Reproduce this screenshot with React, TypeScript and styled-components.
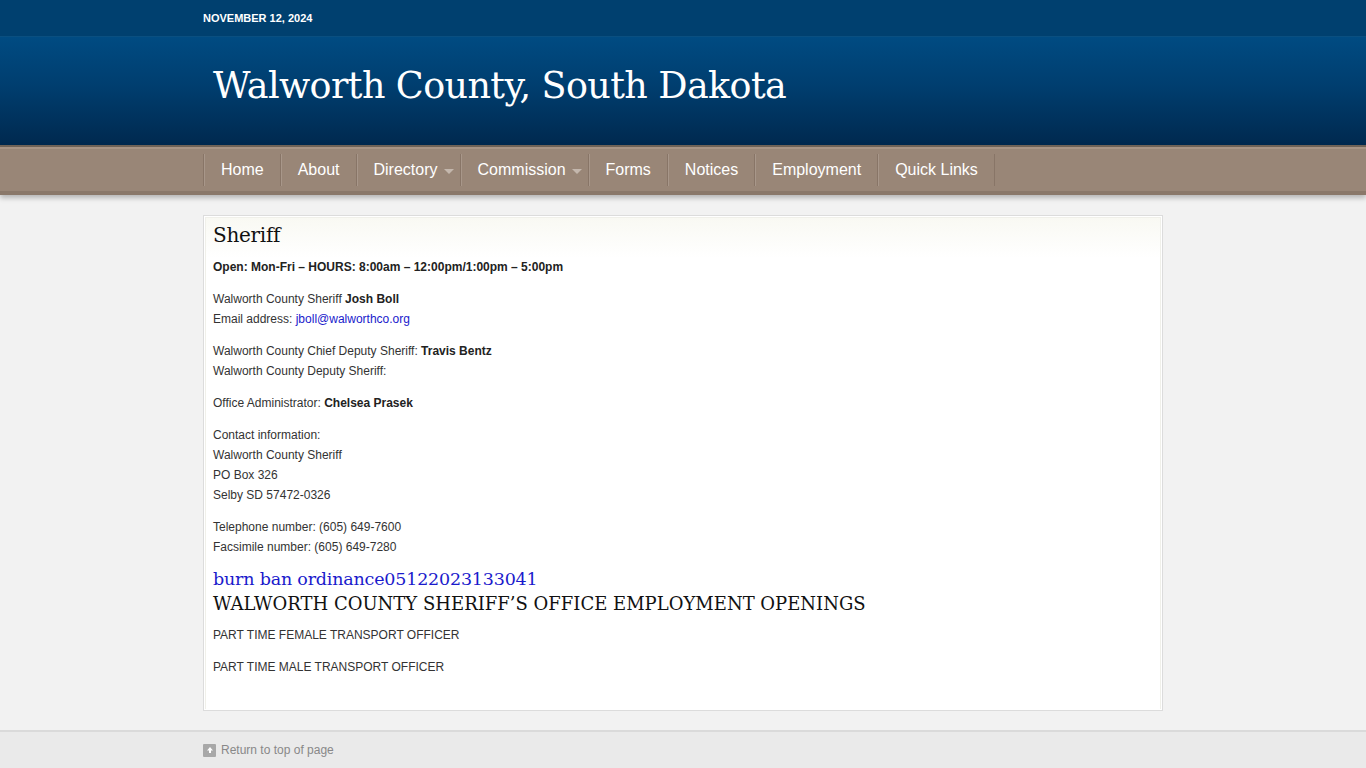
import React from "react";
import styled, { createGlobalStyle } from "styled-components";

const Global = createGlobalStyle`
  html, body { margin: 0; padding: 0; }
  body {
    background: #f2f2f2;
    font-family: "Liberation Sans", Arial, sans-serif;
    color: #333;
  }
`;

const Page = styled.div`
  min-height: 768px;
  display: flex;
  flex-direction: column;
`;

const Wrap = styled.div`
  width: 960px;
  margin: 0 auto;
`;

const TopBar = styled.div`
  background: #00406f;
  height: 36px;
  border-bottom: 1px solid #0a4f80;
`;

const DateText = styled.div`
  font-size: 11px;
  font-weight: bold;
  color: #fff;
  line-height: 36px;
`;

const Header = styled.header`
  height: 108px;
  background: linear-gradient(to bottom, #004b82 0%, #003e6f 45%, #00294f 100%);
`;

const SiteTitle = styled.h1`
  margin: 0;
  padding: 27px 0 0 10px;
  font-family: "DejaVu Serif", Georgia, serif;
  font-weight: normal;
  font-size: 36.5px;
  letter-spacing: -0.6px;
  color: #fff;
  line-height: 44px;
`;

const NavBar = styled.nav`
  background: #998677;
  border-top: 2px solid #6f6257;
  border-bottom: 4px solid #8a786a;
  box-shadow: inset 0 2px 0 #a89485, 0 3px 5px rgba(0, 0, 0, 0.25);
  height: 44px;
  position: relative;
  z-index: 1;
`;

const NavList = styled.ul`
  list-style: none;
  margin: 0 auto;
  padding: 0;
  width: 960px;
  display: flex;
  height: 44px;
`;

const NavItem = styled.li<{ $sub?: boolean }>`
  display: flex;
  align-items: center;
  gap: 4px;
  height: 32px;
  margin-top: 7px;
  padding: 0 ${(p) => (p.$sub ? "6px" : "16px")} 0 17px;
  border-left: 1px solid #887567;
  box-shadow: inset 1px 0 0 #a8978a;
  font-size: 16px;
  color: #fff;
  &:last-child {
    border-right: 1px solid #887567;
  }
`;

const Caret = styled.span`
  width: 0;
  height: 0;
  border-left: 5px solid transparent;
  border-right: 5px solid transparent;
  border-top: 5px solid #c4b7ad;
  margin: 2px 0 0 2px;
`;

const Main = styled.main`
  flex: 1;
  padding: 20px 0 18px;
`;

const Box = styled.article`
  width: 956px;
  margin: 0 auto;
  background: #fff;
  border: 1px solid #dcdcdc;
  padding: 1px;
  box-sizing: content-box;
`;

const Inner = styled.div`
  border: 1px solid #f0f0ea;
  border-bottom: none;
  background: linear-gradient(to bottom, #f9f9f3 0px, #ffffff 40px);
  padding: 3px 7px 20px;
`;

const PageTitle = styled.h2`
  margin: 0 0 8px;
  font-family: "DejaVu Serif", Georgia, serif;
  font-weight: normal;
  font-size: 20px;
  letter-spacing: -0.3px;
  color: #111;
  line-height: 28px;
`;

const P = styled.p`
  margin: 0 0 12px;
  font-size: 12px;
  line-height: 20px;
  color: #333;
  b, strong { color: #222; }
`;

const Mail = styled.a`
  color: #1a1acc;
  text-decoration: none;
`;

const DocLink = styled.a`
  display: block;
  font-family: "DejaVu Serif", Georgia, serif;
  font-size: 17.5px;
  letter-spacing: -0.2px;
  color: #1a1acc;
  text-decoration: none;
  line-height: 24px;
  margin: -2px 0 1px;
`;

const SubHead = styled.h3`
  margin: 0 0 9px;
  font-family: "DejaVu Serif", Georgia, serif;
  font-weight: normal;
  font-size: 18px;
  color: #111;
  line-height: 24px;
`;

const Footer = styled.footer`
  background: #eaeaea;
  border-top: 2px solid #dadada;
  height: 36px;
`;

const TopLink = styled.a`
  display: inline-flex;
  align-items: center;
  gap: 5px;
  font-size: 12px;
  color: #888;
  text-decoration: none;
  line-height: 36px;
`;

const UpIcon = styled.span`
  width: 13px;
  height: 13px;
  background: #a8a8a8;
  border-radius: 1px;
  display: inline-flex;
  align-items: center;
  justify-content: center;
`;

const navItems: { label: string; sub?: boolean }[] = [
  { label: "Home" },
  { label: "About" },
  { label: "Directory", sub: true },
  { label: "Commission", sub: true },
  { label: "Forms" },
  { label: "Notices" },
  { label: "Employment" },
  { label: "Quick Links" },
];

export default function App() {
  return (
    <Page>
      <Global />
      <TopBar>
        <Wrap>
          <DateText>NOVEMBER 12, 2024</DateText>
        </Wrap>
      </TopBar>
      <Header>
        <Wrap>
          <SiteTitle>Walworth County, South Dakota</SiteTitle>
        </Wrap>
      </Header>
      <NavBar>
        <NavList>
          {navItems.map((n) => (
            <NavItem key={n.label} $sub={n.sub}>
              {n.label}
              {n.sub && <Caret />}
            </NavItem>
          ))}
        </NavList>
      </NavBar>
      <Main>
        <Box>
          <Inner>
            <PageTitle>Sheriff</PageTitle>
            <P>
              <b>Open: Mon-Fri – HOURS: 8:00am – 12:00pm/1:00pm – 5:00pm</b>
            </P>
            <P>
              Walworth County Sheriff <b>Josh Boll</b>
              <br />
              Email address: <Mail href="#">jboll@walworthco.org</Mail>
            </P>
            <P>
              Walworth County Chief Deputy Sheriff: <b>Travis Bentz</b>
              <br />
              Walworth County Deputy Sheriff:
            </P>
            <P>
              Office Administrator: <b>Chelsea Prasek</b>
            </P>
            <P>
              Contact information:
              <br />
              Walworth County Sheriff
              <br />
              PO Box 326
              <br />
              Selby SD 57472-0326
            </P>
            <P>
              Telephone number: (605) 649-7600
              <br />
              Facsimile number: (605) 649-7280
            </P>
            <DocLink href="#">burn ban ordinance05122023133041</DocLink>
            <SubHead>WALWORTH COUNTY SHERIFF’S OFFICE EMPLOYMENT OPENINGS</SubHead>
            <P>PART TIME FEMALE TRANSPORT OFFICER</P>
            <P>PART TIME MALE TRANSPORT OFFICER</P>
          </Inner>
        </Box>
      </Main>
      <Footer>
        <Wrap>
          <TopLink href="#">
            <UpIcon>
              <svg width="8" height="8" viewBox="0 0 8 8">
                <path d="M4 1 L7 4.5 H5 V7 H3 V4.5 H1 Z" fill="#fff" />
              </svg>
            </UpIcon>
            Return to top of page
          </TopLink>
        </Wrap>
      </Footer>
    </Page>
  );
}
